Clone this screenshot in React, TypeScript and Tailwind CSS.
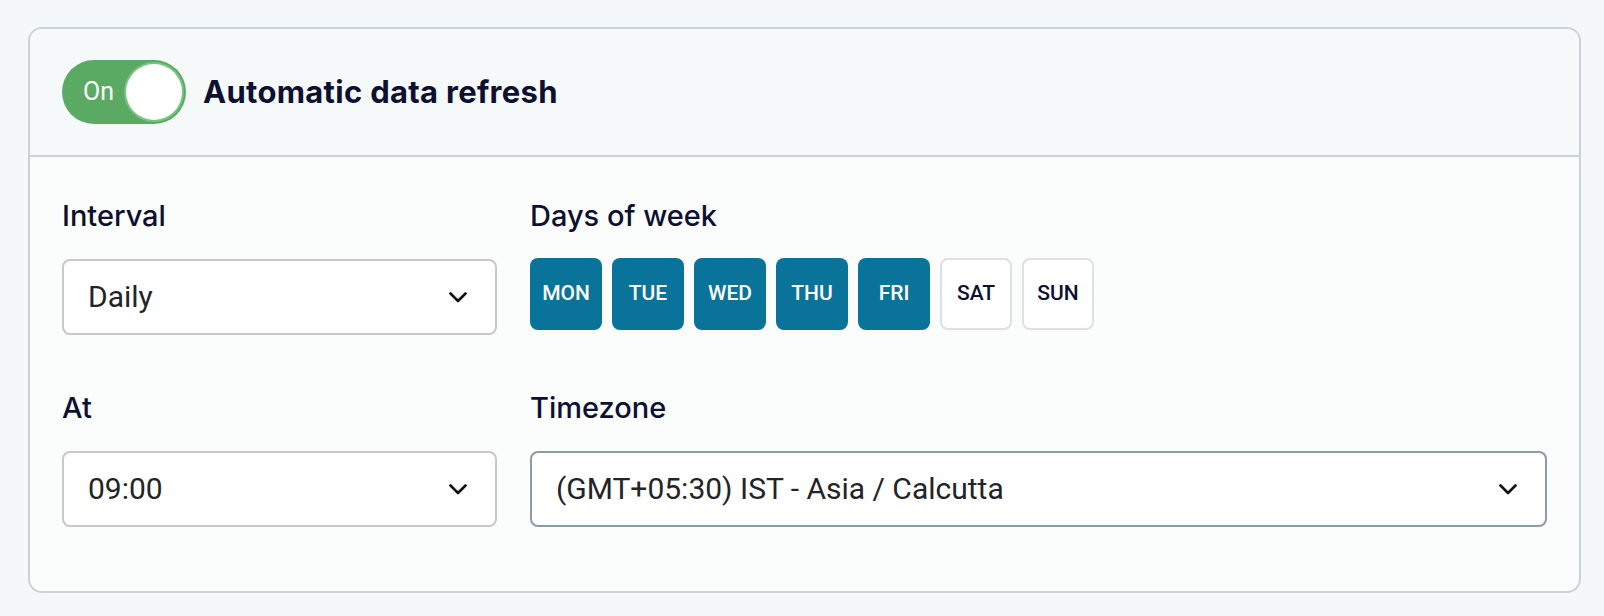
const days = [
  { label: "MON", on: true },
  { label: "TUE", on: true },
  { label: "WED", on: true },
  { label: "THU", on: true },
  { label: "FRI", on: true },
  { label: "SAT", on: false },
  { label: "SUN", on: false },
];

function Chevron() {
  return (
    <svg width="18" height="11" viewBox="0 0 18 11" fill="none" className="shrink-0">
      <polyline
        points="1.5,1.5 9,9 16.5,1.5"
        stroke="#111"
        strokeWidth="2.6"
        strokeLinecap="round"
        strokeLinejoin="round"
      />
    </svg>
  );
}

function Select({ value, strong }: { value: string; strong?: boolean }) {
  return (
    <div
      className={`flex h-[76px] items-center justify-between rounded-[8px] border-2 bg-white pl-[24px] pr-[28px] ${
        strong ? "border-[#8a9ca6]" : "border-[#c5c9cc]"
      }`}
    >
      <span className="text-[30px] leading-none text-[#222426] font-['Roboto',sans-serif]">
        {value}
      </span>
      <Chevron />
    </div>
  );
}

function Label({ children }: { children: string }) {
  return (
    <div className="h-[36px] text-[29px] leading-[36px] font-medium text-[#0d1030] font-['Inter',sans-serif]">
      {children}
    </div>
  );
}

export default function App() {
  return (
    <div className="min-h-screen bg-[#f5f8fa] pt-[27px] pl-[28px] pr-[23px]">
      <div className="overflow-hidden rounded-[14px] border-2 border-[#c9d3d8] bg-[#fbfcfc]">
        {/* Header */}
        <div className="flex h-[128px] items-center gap-[17px] border-b-2 border-[#c9d3d8] bg-[#f5f9fa] pl-[32px]">
          <div className="flex h-[64px] w-[124px] items-center justify-between rounded-full bg-[#5aaa64] pl-[21px] pr-[4px]">
            <span className="text-[25px] text-white font-['Roboto',sans-serif]">On</span>
            <span className="h-[56px] w-[56px] rounded-full bg-white ring-2 ring-[#7cc284]" />
          </div>
          <span className="text-[31px] tracking-[0.3px] font-bold text-[#0d1030] font-['Inter',sans-serif]">
            Automatic data refresh
          </span>
        </div>

        {/* Body */}
        <div className="grid grid-cols-[435px_1fr] gap-x-[33px] pt-[41px] pl-[32px] pr-[32px] pb-[64px]">
          <div className="flex flex-col gap-[25px]">
            <Label>Interval</Label>
            <Select value="Daily" />
          </div>
          <div className="flex flex-col gap-[24px]">
            <Label>Days of week</Label>
            <div className="flex gap-[10px]">
              {days.map((d) => (
                <div
                  key={d.label}
                  className={`flex h-[72px] w-[72px] items-center justify-center rounded-[8px] text-[21px] font-medium font-['Roboto',sans-serif] ${
                    d.on
                      ? "bg-[#0a7399] text-white"
                      : "border-2 border-[#dde1e4] bg-white text-[#0d1030]"
                  }`}
                >
                  {d.label}
                </div>
              ))}
            </div>
          </div>

          <div className="mt-[55px] flex flex-col gap-[25px]">
            <Label>At</Label>
            <Select value="09:00" />
          </div>
          <div className="mt-[55px] flex flex-col gap-[25px]">
            <Label>Timezone</Label>
            <Select value="(GMT+05:30) IST - Asia / Calcutta" strong />
          </div>
        </div>
      </div>
    </div>
  );
}
